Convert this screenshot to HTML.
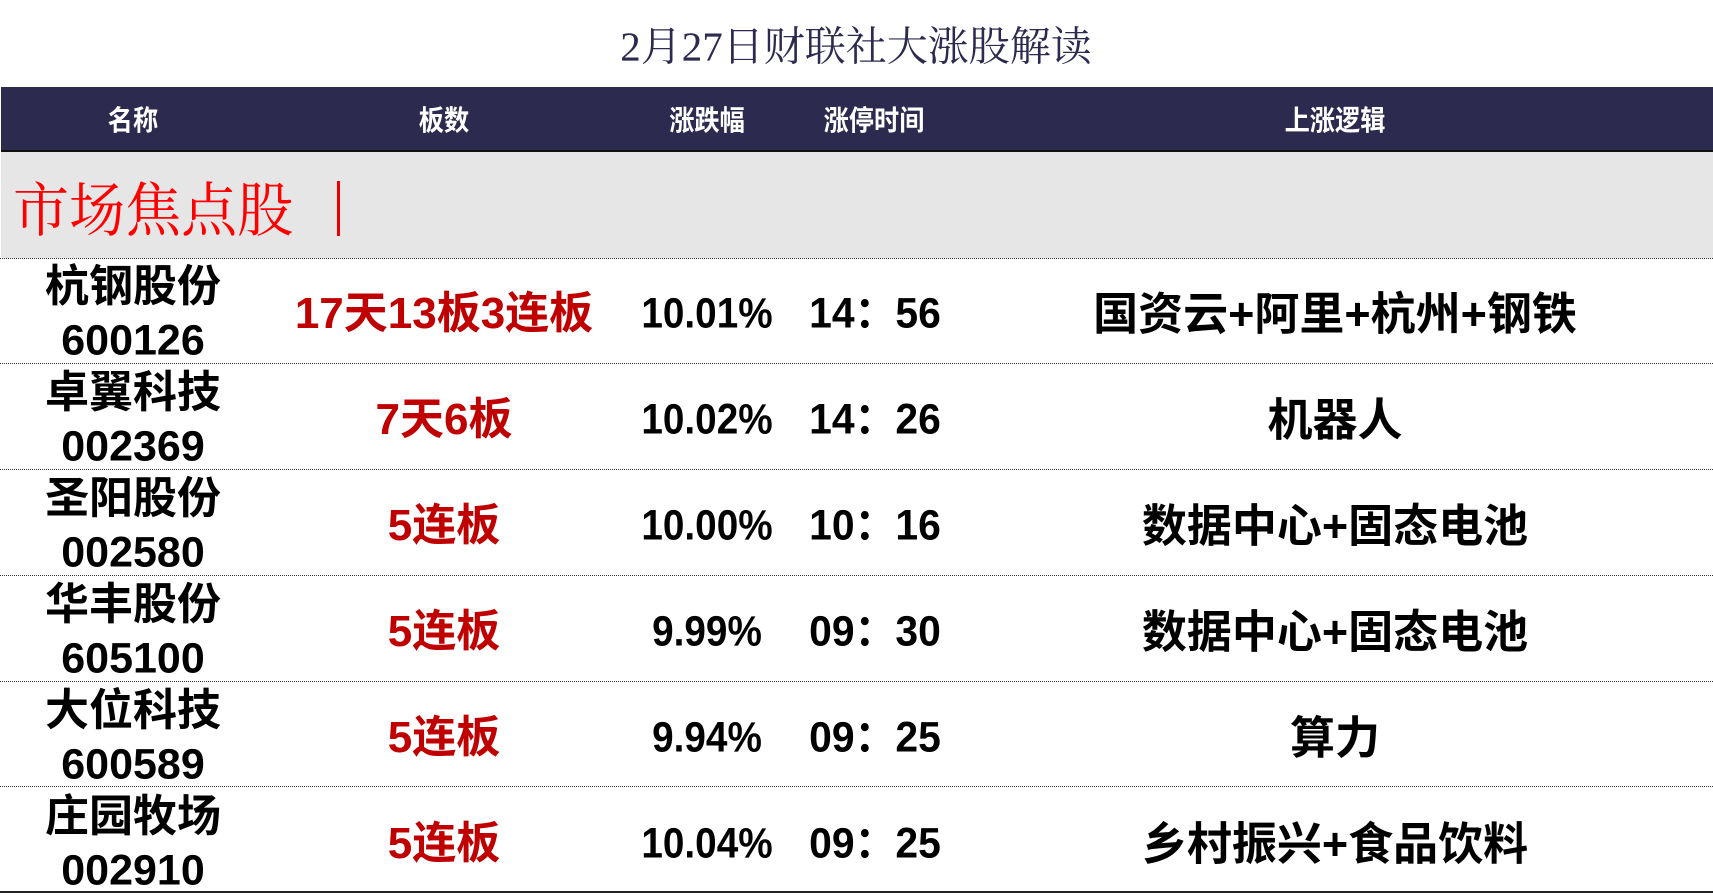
<!DOCTYPE html>
<html><head><meta charset="utf-8"><style>
body{margin:0;width:1713px;height:894px;background:#fff;position:relative;overflow:hidden;font-family:"Liberation Sans","Noto Sans CJK SC",sans-serif}
.t{position:absolute;white-space:nowrap;transform:translate(-50%,-50%) scaleX(0.9);line-height:1}
.n{transform:translate(-50%,-50%)}
.tm{transform:translate(-50%,-50%) scaleX(0.95)}
.hd{position:absolute;left:1px;top:87px;width:1712px;height:63px;background:#2c2a4f;border-bottom:2px solid #111}
.gray{position:absolute;left:1px;top:152px;width:1712px;height:106px;background:#e6e6e6}
.ln{position:absolute;left:0;width:1713px;border-top:1px dotted #333}
.w{color:#fff;font-size:28px;font-weight:bold}
.b{color:#000;font-size:43px;font-weight:bold}
.nm{font-size:44px}
.lg{font-size:45px}
.r{color:#c00000;font-size:44px;font-weight:bold;transform:translate(-50%,-50%)}
</style></head><body>
<div class="t n" style="left:856px;top:47px;font-size:41px;color:#2c2a4f;font-family:'Liberation Serif','Noto Serif CJK SC',serif">2月27日财联社大涨股解读</div>
<div class="hd"></div>
<div class="t w" style="left:133px;top:121px">名称</div>
<div class="t w" style="left:444px;top:121px">板数</div>
<div class="t w" style="left:707px;top:121px">涨跌幅</div>
<div class="t w" style="left:874px;top:121px">涨停时间</div>
<div class="t w" style="left:1335px;top:121px">上涨逻辑</div>
<div class="gray"></div>
<div style="position:absolute;left:13px;top:176px;font-size:59px;color:#f00;font-family:'Noto Serif CJK SC',serif;line-height:1;transform:scaleX(0.95);transform-origin:left">市场焦点股</div>
<div style="position:absolute;left:337px;top:181px;width:3px;height:55px;background:#e00"></div>
<div class="ln" style="top:258px"></div>
<div class="ln" style="top:363px"></div>
<div class="ln" style="top:469px"></div>
<div class="ln" style="top:575px"></div>
<div class="ln" style="top:681px"></div>
<div class="ln" style="top:786px"></div>
<div style="position:absolute;left:0;top:891px;width:1713px;border-top:2px solid #222"></div>

<div class="t b n nm" style="left:133px;top:287px">杭钢股份</div><div class="t b n" style="left:133px;top:341px">600126</div>
<div class="t r" style="left:444px;top:314px">17天13板3连板</div>
<div class="t b" style="left:707px;top:314px">10.01%</div><div class="t b tm" style="left:875px;top:314px">14：56</div>
<div class="t b n lg" style="left:1335px;top:314px">国资云+阿里+杭州+钢铁</div>

<div class="t b n nm" style="left:133px;top:393px">卓翼科技</div><div class="t b n" style="left:133px;top:447px">002369</div>
<div class="t r" style="left:444px;top:420px">7天6板</div>
<div class="t b" style="left:707px;top:420px">10.02%</div><div class="t b tm" style="left:875px;top:420px">14：26</div>
<div class="t b n lg" style="left:1335px;top:420px">机器人</div>

<div class="t b n nm" style="left:133px;top:499px">圣阳股份</div><div class="t b n" style="left:133px;top:553px">002580</div>
<div class="t r" style="left:444px;top:526px">5连板</div>
<div class="t b" style="left:707px;top:526px">10.00%</div><div class="t b tm" style="left:875px;top:526px">10：16</div>
<div class="t b n lg" style="left:1335px;top:526px">数据中心+固态电池</div>

<div class="t b n nm" style="left:133px;top:605px">华丰股份</div><div class="t b n" style="left:133px;top:659px">605100</div>
<div class="t r" style="left:444px;top:632px">5连板</div>
<div class="t b" style="left:707px;top:632px">9.99%</div><div class="t b tm" style="left:875px;top:632px">09：30</div>
<div class="t b n lg" style="left:1335px;top:632px">数据中心+固态电池</div>

<div class="t b n nm" style="left:133px;top:711px">大位科技</div><div class="t b n" style="left:133px;top:765px">600589</div>
<div class="t r" style="left:444px;top:738px">5连板</div>
<div class="t b" style="left:707px;top:738px">9.94%</div><div class="t b tm" style="left:875px;top:738px">09：25</div>
<div class="t b n lg" style="left:1335px;top:738px">算力</div>

<div class="t b n nm" style="left:133px;top:817px">庄园牧场</div><div class="t b n" style="left:133px;top:871px">002910</div>
<div class="t r" style="left:444px;top:844px">5连板</div>
<div class="t b" style="left:707px;top:844px">10.04%</div><div class="t b tm" style="left:875px;top:844px">09：25</div>
<div class="t b n lg" style="left:1335px;top:844px">乡村振兴+食品饮料</div>
</body></html>
